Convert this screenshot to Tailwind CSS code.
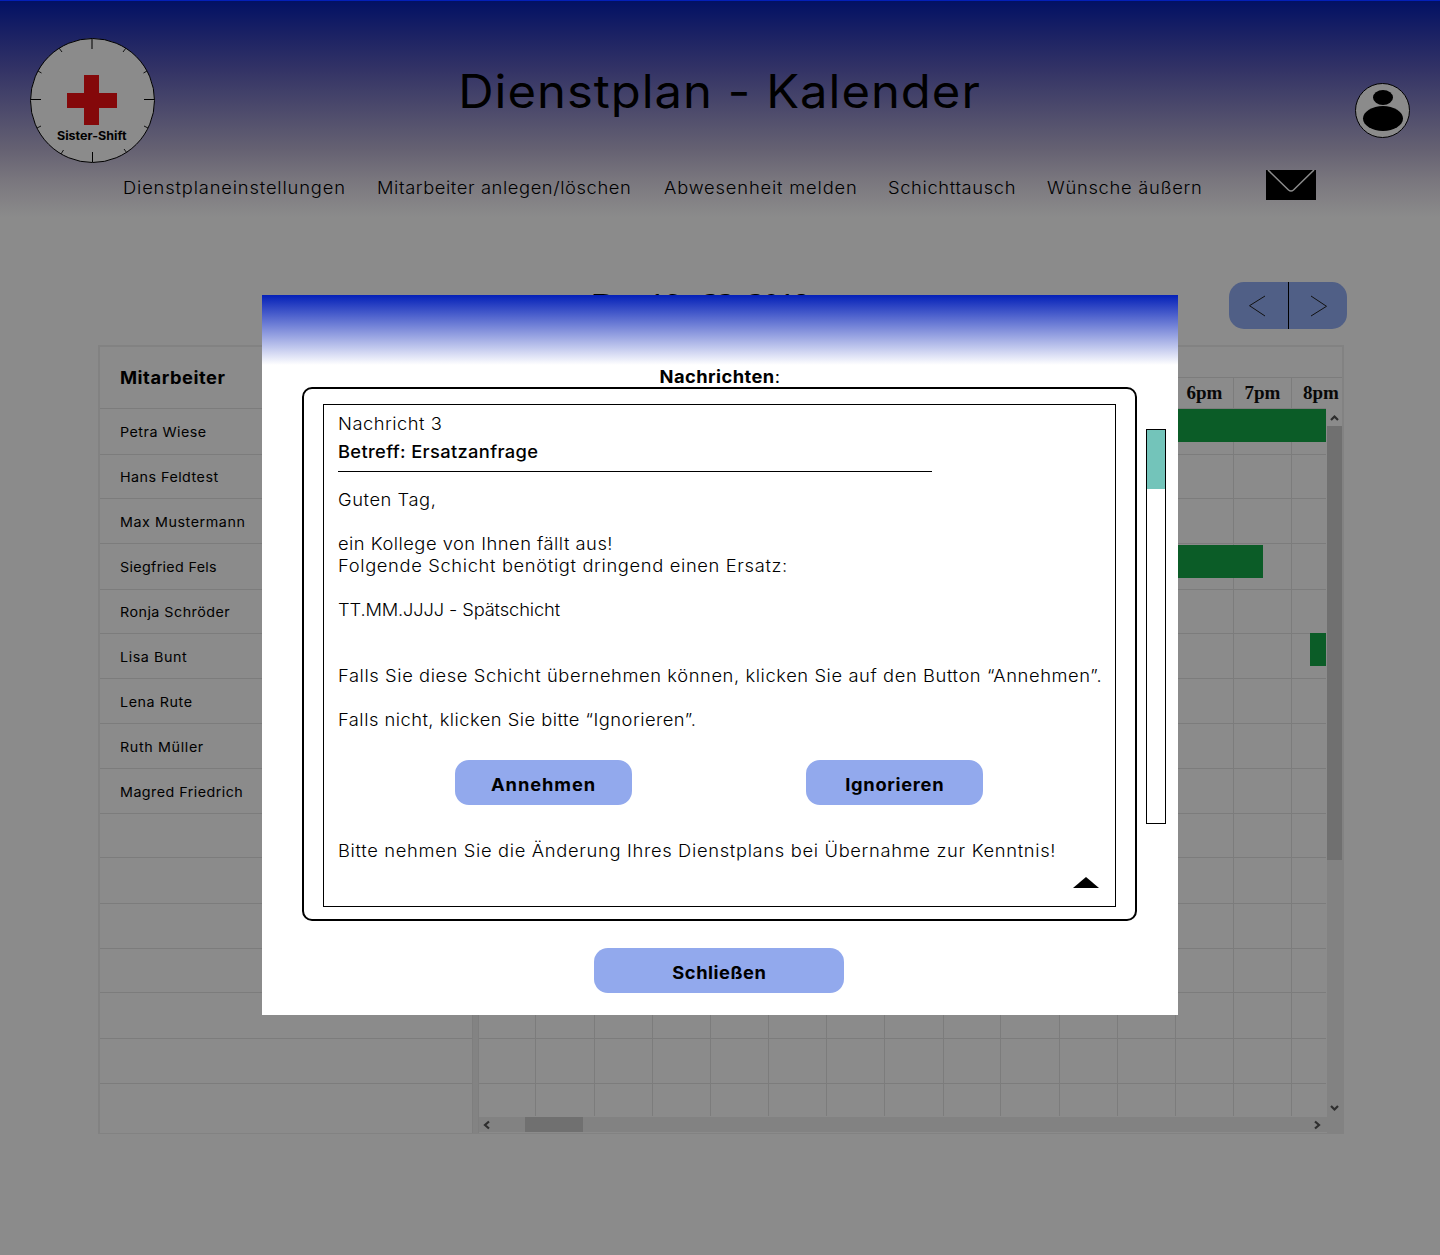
<!DOCTYPE html>
<html lang="de">
<head>
<meta charset="utf-8">
<title>Dienstplan - Kalender</title>
<script src="https://cdn.jsdelivr.net/npm/@tailwindcss/browser@4"></script>
</head>
<body class="relative w-[1440px] h-[1255px] overflow-hidden bg-[#8b8b8b] font-['Inter',sans-serif] text-black whitespace-nowrap">

<!-- Header -->
<header class="h-[220px] border-t border-[#0420b8] bg-[linear-gradient(180deg,#021164_0px,#1c2264_35px,#343466_70px,#4a486b_105px,#656172_148px,#7a777e_180px,#8b8b8b_216px)]">
  <div class="flex justify-between pl-[30px] pr-[30px] h-[139px]">
    <svg class="mt-[37px] w-[125px] h-[125px] shrink-0" viewBox="0 0 125 125">
      <circle cx="62.5" cy="62.5" r="62" fill="#8b8b8b" stroke="#000"/>
      <path d="M62 1v10" stroke="#444" stroke-width="2"/>
      <path d="M62.500 124v-10M1 61.500h10M124 61.500h-10" stroke="#000"/>
      <path d="M29 10l3 4M96 10l-3 4M8 33l3.500 2M117 33l-3.500 2M7 90l4-2M118 90l-4-2M31 116l2.500-4M97 115l-3-4" stroke="#111" fill="none"/>
      <path d="M54 37h15v18h18v15H69v17H54V70H37V55h17z" fill="#84080a"/>
      <text x="27" y="102" font-size="11.6" font-weight="700" textLength="69.500" lengthAdjust="spacingAndGlyphs" font-family="Inter">Sister-Shift</text>
    </svg>
    <h1 class="mt-[62px] h-14 text-[46.2px] leading-[56px] tracking-[0.95px] scale-x-[1.06]">Dienstplan - Kalender</h1>
    <div class="w-[125px] flex justify-end">
      <svg class="mt-[82px] w-[55px] h-[55px]" viewBox="0 0 55 55">
        <circle cx="27.500" cy="27.500" r="27" fill="#8b8b8b" stroke="#000"/>
        <ellipse cx="28" cy="14.500" rx="10" ry="7.500"/>
        <ellipse cx="28" cy="35.500" rx="20" ry="12.500"/>
      </svg>
    </div>
  </div>
  <nav class="flex pl-[123px] pt-[29px] text-[17.3px]">
    <div class="flex pt-2 leading-[22px] h-[30px] font-light">
      <a class="w-[254px] origin-left scale-x-[1.06] tracking-[0.79px]">Dienstplaneinstellungen</a>
      <a class="w-[287px] origin-left scale-x-[1.06] tracking-[0.56px]">Mitarbeiter anlegen/löschen</a>
      <a class="w-[224px] origin-left scale-x-[1.06] tracking-[0.78px]">Abwesenheit melden</a>
      <a class="w-[159px] origin-left scale-x-[1.06] tracking-[0.6px]">Schichttausch</a>
      <a class="w-[219px] origin-left scale-x-[1.06] tracking-[0.67px]">Wünsche äußern</a>
    </div>
    <svg class="w-[50px] h-[30px] mt-px" viewBox="0 0 50 30">
      <path d="M0 0h50v30H0z"/>
      <path d="M2 0L22.500 20Q25 22 27.500 20L48 0" fill="none" stroke="#8b8b8b" stroke-width="1.500"/>
    </svg>
  </nav>
</header>

<main class="pl-[98px] pt-[62px]">
  <div class="flex w-[1249px] h-[63px]">
    <div class="flex-1 pl-[495px] pt-[3px] font-['Liberation_Serif',serif] font-bold text-[30px] leading-9">Dec 16 - 22, 2018</div>
    <svg class="w-[118px] h-[47px]" viewBox="0 0 118 47" fill="none" stroke="#000">
      <rect width="118" height="47" rx="15" fill="#505f86" stroke="none"/>
      <path d="M59.500 0v47"/>
      <path d="M36 14L20.500 23.700L36 34M82 14L97.500 24.300L82 34" stroke="#111"/>
    </svg>
  </div>

  <!-- Schedule table: stacked layers in one grid cell -->
  <div class="grid w-[1246px] h-[789px] border-2 border-b border-[#828282]">
    <div id="rows" class="[grid-area:1/1] flex flex-col pt-[61px]"></div>
    <div class="[grid-area:1/1] flex pt-[30px]">
      <div class="w-[372px] -mt-[30px] pl-5 pt-5">
        <h2 class="h-[55px] font-bold text-[17.3px] leading-[22px] origin-left scale-x-[1.06] tracking-[0.51px]">Mitarbeiter</h2>
        <ul class="text-[13.5px] leading-[45px] -mt-[12.500px] origin-left scale-x-[1.06] tracking-[0.44px]">
          <li class="tracking-[0.45px]">Petra Wiese</li>
          <li>Hans Feldtest</li>
          <li class="tracking-[0.52px]">Max Mustermann</li>
          <li class="tracking-[0.3px]">Siegfried Fels</li>
          <li>Ronja Schröder</li>
          <li class="tracking-[0.53px]">Lisa Bunt</li>
          <li class="tracking-[0.53px]">Lena Rute</li>
          <li class="tracking-[0.6px]">Ruth Müller</li>
          <li class="tracking-[0.43px]">Magred Friedrich</li>
        </ul>
      </div>
      <div class="w-[7px] -mt-[30px] bg-[#838383] border-x border-[#7e7e7e]"></div>
      <div class="flex-1 flex flex-col">
        <div id="cols" class="flex h-[739px] border-t border-[#7c7c7c] font-['Liberation_Serif',serif] font-bold text-[19px] leading-[30px] text-center text-[#080808]"></div>
        <div class="flex items-start h-[15px] mt-px w-[848px] bg-[#828282]">
          <svg class="w-[46px] h-3 mt-0.5" viewBox="0 0 46 12"><path d="M10 2.500L6 6l4 3.500" fill="none" stroke="#2e2e2e" stroke-width="2.200"/></svg>
          <div class="w-[58px] h-[15px] bg-[#707070]"></div>
          <svg class="w-3 h-3 mt-0.5 ml-auto mr-[3px]" viewBox="0 0 12 12"><path d="M3 2.500L7 6L3 9.500" fill="none" stroke="#2e2e2e" stroke-width="2.200"/></svg>
        </div>
      </div>
    </div>
    <!-- Shifts and vertical scrollbar -->
    <div class="[grid-area:1/1] relative flex justify-end pt-[62px]">
      <div class="absolute right-[16px] top-[62px] w-[200px] h-[33px] bg-[#0b5c27]"></div>
      <div class="absolute right-[79px] top-[198px] w-[137px] h-[33px] bg-[#0b5c27]"></div>
      <div class="absolute right-[16px] top-[286px] w-[16px] h-[33px] bg-[#0b5c27]"></div>
      <div class="flex flex-col w-[15px] bg-[#828282]">
        <svg class="w-[15px] h-[17px] bg-[#8b8b8b]" viewBox="0 0 15 17"><path d="M4 11l3.500-3.500L11 11" fill="none" stroke="#2e2e2e" stroke-width="2.200"/></svg>
        <div class="h-[434px] bg-[#707070]"></div>
        <svg class="w-[15px] h-[17px] mt-[239px]" viewBox="0 0 15 17"><path d="M4 7l3.500 3.500L11 7" fill="none" stroke="#2e2e2e" stroke-width="2.200"/></svg>
      </div>
    </div>
  </div>
</main>

<!-- Message dialog -->
<section class="absolute left-[262px] top-[295px] w-[916px] h-[720px] bg-white bg-[linear-gradient(180deg,#0420b8_0px,#fff_70px)] flex flex-col items-center pt-[71px]">
  <h2 class="h-[21px] text-[17.3px] leading-[22px] font-bold scale-x-[1.06] tracking-[0.4px]">Nachrichten<span class="font-normal">:</span></h2>
  <div class="flex self-stretch pl-10 h-[534px]">
    <div class="w-[835px] h-[534px] border-2 border-black rounded-[10px] pl-[19px] pt-[15px]">
      <article class="w-[793px] h-[503px] border border-black pl-[14px] pt-[7.500px] text-[17.3px] leading-[22px] font-light">
        <p class="origin-left scale-x-[1.06] tracking-[0.47px]">Nachricht 3</p>
        <div class="mt-1.5 pb-[8.500px] w-[594px] border-b border-black font-medium">
          <p class="origin-left scale-x-[1.06] tracking-[0.32px]">Betreff: Ersatzanfrage</p>
        </div>
        <div class="mt-[17px] h-[271px] origin-left scale-x-[1.06]">
          <p class="tracking-[0.52px]">Guten Tag,</p>
          <p class="mt-[22px] tracking-[0.46px]">ein Kollege von Ihnen fällt aus!</p>
          <p class="tracking-[0.61px]">Folgende Schicht benötigt dringend einen Ersatz:</p>
          <p class="mt-[22px] tracking-[-0.14px]">TT.MM.JJJJ - Spätschicht</p>
          <p class="mt-11 tracking-[0.555px]">Falls Sie diese Schicht übernehmen können, klicken Sie auf den Button “Annehmen”.</p>
          <p class="mt-[22px] tracking-[0.45px]">Falls nicht, klicken Sie bitte “Ignorieren”.</p>
        </div>
        <div class="flex gap-[174px] pl-[117px]">
          <button class="w-[177px] h-[45px] rounded-[14px] bg-[#92a9ed] font-bold pt-1"><span class="inline-block scale-x-[1.06] tracking-[0.85px]">Annehmen</span></button>
          <button class="w-[177px] h-[45px] rounded-[14px] bg-[#92a9ed] font-bold pt-1"><span class="inline-block scale-x-[1.06] tracking-[0.65px]">Ignorieren</span></button>
        </div>
        <p class="mt-[35px] origin-left scale-x-[1.06] tracking-[0.635px]">Bitte nehmen Sie die Änderung Ihres Dienstplans bei Übernahme zur Kenntnis!</p>
        <svg class="ml-auto mr-4 mt-[15px] w-[26px] h-[11px]" viewBox="0 0 26 11"><path d="M13 0L26 11H0z"/></svg>
      </article>
    </div>
    <div class="ml-[9px] mt-[42px] w-5 h-[395px] border border-black bg-white">
      <div class="h-[59px] bg-[#73c4ba]"></div>
    </div>
  </div>
  <button class="mt-[27px] -ml-[2px] w-[250px] h-[45px] rounded-[14px] bg-[#92a9ed] font-bold text-[17.3px] pt-1"><span class="inline-block scale-x-[1.06] tracking-[0.5px]">Schließen</span></button>
</section>

<script>
  // Row and column edges of the grid, in pixels
  const rowEdges = [408, 454, 498, 543, 589, 633, 678, 723, 768, 813, 857, 903, 948, 992, 1038, 1083];
  document.getElementById('rows').innerHTML = rowEdges.slice(1).map((y, i) =>
    `<div class="border-t border-[#7c7c7c] w-[1226px]" style="height:${y - rowEdges[i]}px"></div>`
  ).join('') + '<div class="border-t border-[#7c7c7c] w-[1226px] h-[50px]"></div>';

  const colEdges = [478, 535, 594, 652, 710, 768, 826, 884, 943, 1000, 1059, 1117, 1175, 1233, 1291, 1341];
  const hours = ['6am', '7am', '8am', '9am', '10am', '11am', '12pm', '1pm', '2pm', '3pm', '4pm', '5pm', '6pm', '7pm', '8pm'];
  document.getElementById('cols').innerHTML = hours.map((h, i) =>
    `<div class="${i < 14 ? 'border-r pr-0' : 'pl-2'} border-[#7c7c7c]" style="width:${colEdges[i + 1] - colEdges[i]}px">${h}</div>`
  ).join('');
</script>
</body>
</html>
